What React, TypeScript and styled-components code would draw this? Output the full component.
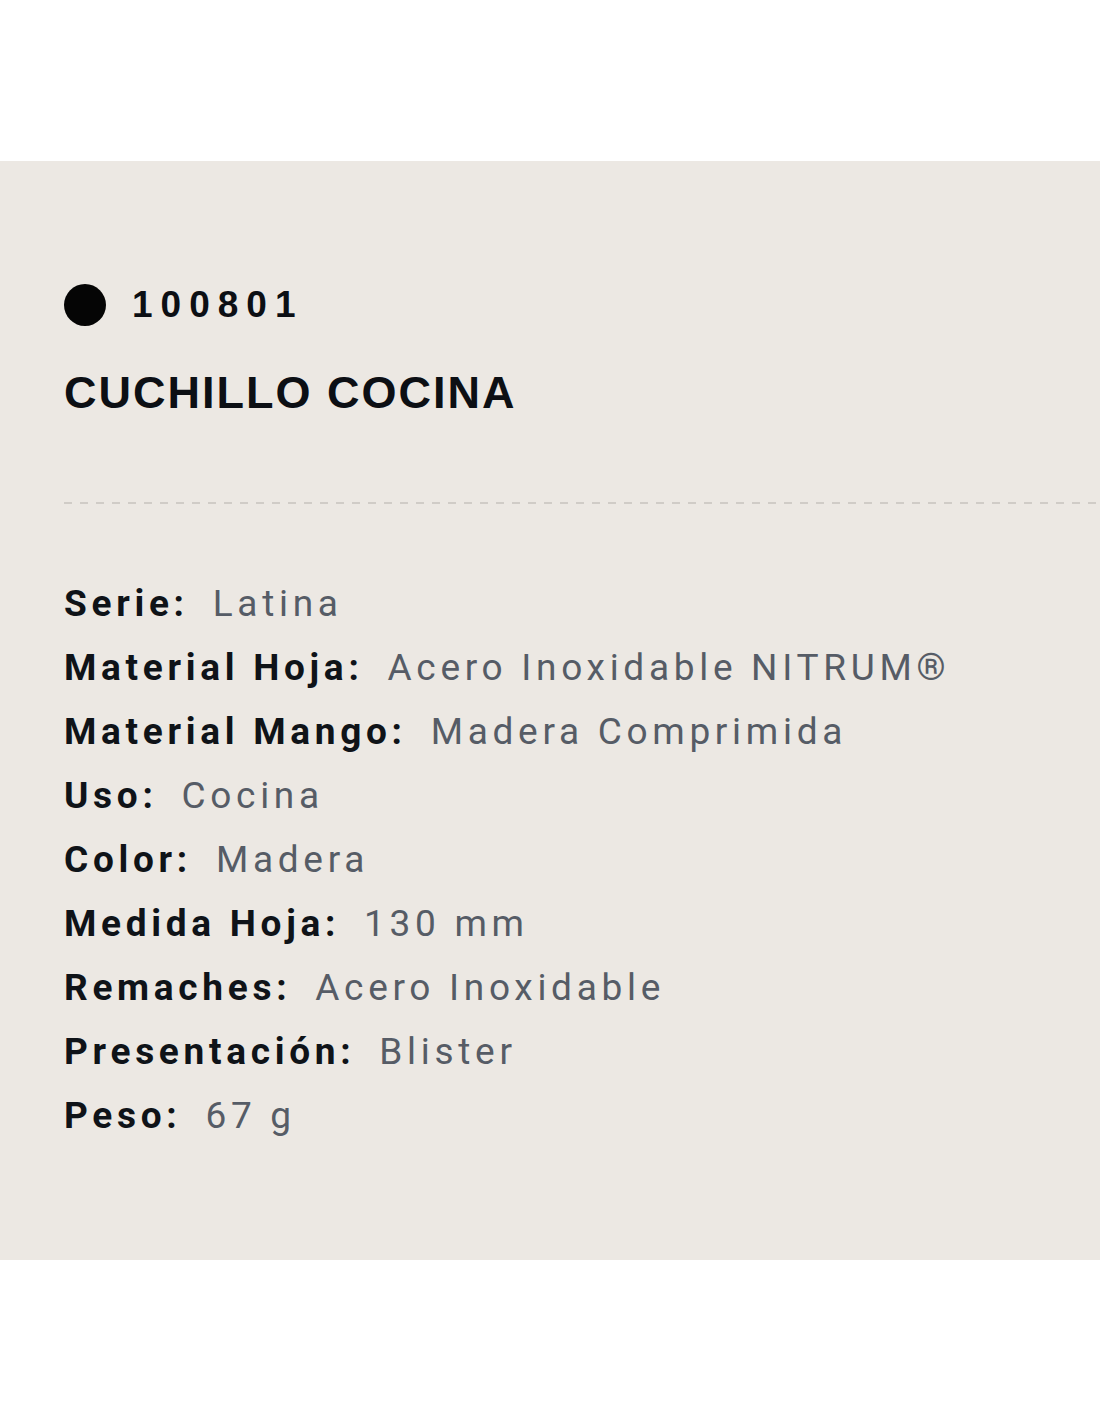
import React from 'react'
import styled, { createGlobalStyle } from 'styled-components'

const GlobalStyle = createGlobalStyle`
    html, body {
        margin: 0;
        padding: 0;
        background: #ffffff;
    }
`

const Page = styled.div`
    width: 1100px;
    height: 1422px;
    padding-top: 161px;
    box-sizing: border-box;
`

const Panel = styled.section`
    background-color: #ece8e3;
    height: 1099px;
    padding: 123px 0 0 64px;
    box-sizing: border-box;
`

const CodeRow = styled.div`
    display: flex;
    align-items: center;
    height: 42px;
    gap: 26px;
`

const Dot = styled.span`
    width: 42px;
    height: 42px;
    border-radius: 50%;
    background: #050505;
    flex-shrink: 0;
`

const Code = styled.span`
    font-family: 'Liberation Sans', Arial, sans-serif;
    font-weight: 700;
    font-size: 37px;
    line-height: 42px;
    letter-spacing: 8px;
    color: #0c0f14;
`

const Title = styled.h1`
    margin: 44px 0 0;
    font-family: 'Liberation Sans', Arial, sans-serif;
    font-weight: 700;
    font-size: 45px;
    line-height: 45px;
    letter-spacing: 2px;
    color: #0c0f14;
`

const Divider = styled.div`
    margin-top: 87px;
    height: 2px;
    background-image: repeating-linear-gradient(
        to right,
        #d0ccc7 0,
        #d0ccc7 8px,
        transparent 8px,
        transparent 16px
    );
`

const Specs = styled.dl`
    margin: 68px 0 0;
    font-family: Roboto, 'Liberation Sans', sans-serif;
    font-size: 37px;
    letter-spacing: 4.7px;
`

const SpecRow = styled.div`
    display: flex;
    height: 64px;
    line-height: 64px;
`

const Label = styled.dt`
    font-weight: 700;
    color: #0f1318;
`

const Value = styled.dd`
    margin: 0 0 0 24px;
    font-weight: 400;
    color: #565c66;
`

const specs: [string, string][] = [
    ['Serie', 'Latina'],
    ['Material Hoja', 'Acero Inoxidable NITRUM®'],
    ['Material Mango', 'Madera Comprimida'],
    ['Uso', 'Cocina'],
    ['Color', 'Madera'],
    ['Medida Hoja', '130 mm'],
    ['Remaches', 'Acero Inoxidable'],
    ['Presentación', 'Blister'],
    ['Peso', '67 g']
]

const App = () => (
    <Page>
        <GlobalStyle />
        <Panel>
            <CodeRow>
                <Dot />
                <Code>100801</Code>
            </CodeRow>
            <Title>CUCHILLO COCINA</Title>
            <Divider />
            <Specs>
                {specs.map(([label, value]) => (
                    <SpecRow key={label}>
                        <Label>{label}:</Label>
                        <Value>{value}</Value>
                    </SpecRow>
                ))}
            </Specs>
        </Panel>
    </Page>
)

export default App
